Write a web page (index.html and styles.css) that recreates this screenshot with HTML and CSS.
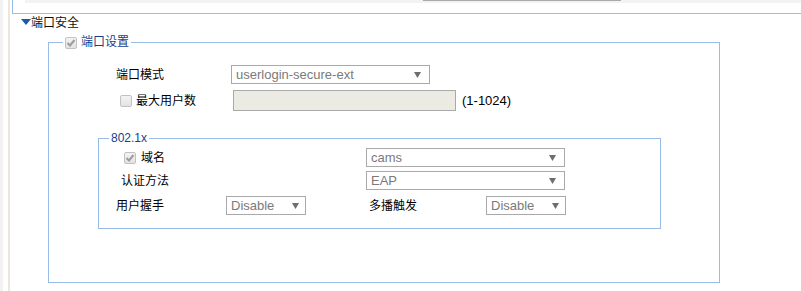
FILE: index.html
```html
<!DOCTYPE html>
<html lang="zh-CN">
<head>
<meta charset="utf-8">
<title>端口安全</title>
<link rel="stylesheet" href="styles.css">
</head>
<body>
<div class="page">
  <div class="rail"></div>
  <div class="main">
    <div class="toppanel"><div class="topbar"><div class="thumb"></div></div></div>
    <div class="sechead"><svg class="tri" width="10" height="6" viewBox="0 0 10 6"><polygon points="0,0 10,0 5,6"/></svg><span>端口安全</span></div>
    <fieldset class="outer">
      <legend class="lg-outer"><span class="cb checked"><svg width="10" height="10" viewBox="0 0 10 10"><polyline points="1.5,5 4,7.5 8.5,2"/></svg></span><span>端口设置</span></legend>
      <div class="row r-mode">
        <span class="lbl w115">端口模式</span>
        <div class="sel w199"><span>userlogin-secure-ext</span><svg class="arr" width="7" height="6" viewBox="0 0 7 6"><polygon points="0,0 7,0 3.5,6"/></svg></div>
      </div>
      <div class="row r-max">
        <span class="cb"></span>
        <span class="lbl w97">最大用户数</span>
        <div class="inp"></div>
        <span class="range">(1-1024)</span>
      </div>
      <fieldset class="inner">
        <legend class="lg-inner">802.1x</legend>
        <div class="row r-domain">
          <span class="cb checked cb-domain"><svg width="10" height="10" viewBox="0 0 10 10"><polyline points="1.5,5 4,7.5 8.5,2"/></svg></span>
          <span class="lbl w225">域名</span>
          <div class="sel w199"><span>cams</span><svg class="arr" width="7" height="6" viewBox="0 0 7 6"><polygon points="0,0 7,0 3.5,6"/></svg></div>
        </div>
        <div class="row r-auth">
          <span class="lbl w245">认证方法</span>
          <div class="sel w199"><span>EAP</span><svg class="arr" width="7" height="6" viewBox="0 0 7 6"><polygon points="0,0 7,0 3.5,6"/></svg></div>
        </div>
        <div class="row r-hs">
          <span class="lbl w110">用户握手</span>
          <div class="sel w80"><span>Disable</span><svg class="arr" width="7" height="6" viewBox="0 0 7 6"><polygon points="0,0 7,0 3.5,6"/></svg></div>
          <span class="lbl w117 ml63">多播触发</span>
          <div class="sel w80"><span>Disable</span><svg class="arr" width="7" height="6" viewBox="0 0 7 6"><polygon points="0,0 7,0 3.5,6"/></svg></div>
        </div>
      </fieldset>
    </fieldset>
  </div>
</div>
</body>
</html>
```
FILE: styles.css
```css
html, body {
  margin: 0;
  padding: 0;
  background: #fff;
}
body {
  font: 12px/16px "Liberation Sans", "Noto Sans CJK SC", sans-serif;
  color: #000;
}
.page {
  display: flex;
  min-height: 291px;
}
.rail {
  flex: none;
  width: 10px;
  box-sizing: border-box;
  border-left: 3px solid #f2f2f2;
  border-right: 2px solid #ece8d9;
}
.main {
  flex: 1;
  min-width: 0;
}
.toppanel {
  margin-left: 2px;
  height: 13px;
  border-left: 1px solid #99bbe8;
  border-bottom: 1px solid #99bbe8;
}
.topbar {
  margin-left: 12px;
  height: 3px;
  background: #f3f3f3;
}
.thumb {
  margin-left: 398px;
  width: 198px;
  height: 1px;
  background: #a9a9a9;
}
.sechead {
  display: flex;
  align-items: flex-start;
  padding: 1px 0 0 11px;
  height: 16px;
  line-height: 16px;
  color: #111;
}
.tri {
  margin-top: 4px;
  fill: #1b5aa8;
  flex: none;
}
fieldset {
  margin: 0;
  padding: 0;
  border: 1px solid #99bbe8;
  box-sizing: border-box;
  min-inline-size: auto;
}
.outer {
  margin: 3px 0 0 38px;
  width: 672px;
  padding-bottom: 53px;
}
.lg-outer {
  margin-left: 14px;
  padding: 0 2px;
  height: 17px;
  line-height: 17px;
  display: flex;
  align-items: center;
  color: #15428b;
}
.cb {
  flex: none;
  width: 12px;
  height: 12px;
  box-sizing: border-box;
  border: 1px solid #c2c2c2;
  border-radius: 2px;
  background: linear-gradient(#f3f3f3, #e3e3e3);
  display: inline-flex;
  align-items: center;
  justify-content: center;
  margin-right: 4px;
}
.cb svg polyline {
  fill: none;
  stroke: #9c9c9c;
  stroke-width: 2;
}
.cb-domain {
  margin-right: 5px;
}
.row {
  display: flex;
  align-items: center;
}
.lbl {
  flex: none;
  white-space: nowrap;
}
.w115 { width: 115px; }
.w97 { width: 97px; }
.w225 { width: 225px; }
.w245 { width: 245px; }
.w110 { width: 110px; }
.w117 { width: 117px; }
.ml63 { margin-left: 63px; }
.sel {
  flex: none;
  box-sizing: border-box;
  height: 19px;
  border: 1px solid #a9a9a9;
  background: #fff;
  display: flex;
  align-items: center;
  justify-content: space-between;
  padding: 0 8px 0 4px;
  font: 13px/17px "Liberation Sans", Arial, sans-serif;
  color: #7a7a7a;
}
.w199 { width: 199px; }
.w80 { width: 80px; padding-right: 6px; }
.arr {
  fill: #6e6e6e;
  flex: none;
}
.r-mode {
  margin-top: 14px;
  height: 19px;
  padding-left: 67px;
}
.r-max {
  margin-top: 6px;
  height: 21px;
  padding-left: 71px;
}
.inp {
  flex: none;
  box-sizing: border-box;
  width: 223px;
  height: 21px;
  border: 1px solid #a9a9a9;
  background: #ebebe4;
}
.range {
  margin-left: 6px;
  font: 13px/17px "Liberation Sans", Arial, sans-serif;
}
.inner {
  margin: 20px 0 0 49px;
  width: 563px;
  padding-bottom: 13px;
}
.lg-inner {
  margin-left: 10px;
  padding: 0 2px;
  height: 15px;
  line-height: 15px;
  color: #15428b;
}
.r-domain {
  margin-top: 2px;
  height: 19px;
  padding-left: 25px;
}
.r-auth {
  margin-top: 4px;
  height: 19px;
  padding-left: 22px;
}
.r-hs {
  margin-top: 6px;
  height: 19px;
  padding-left: 17px;
}
```
